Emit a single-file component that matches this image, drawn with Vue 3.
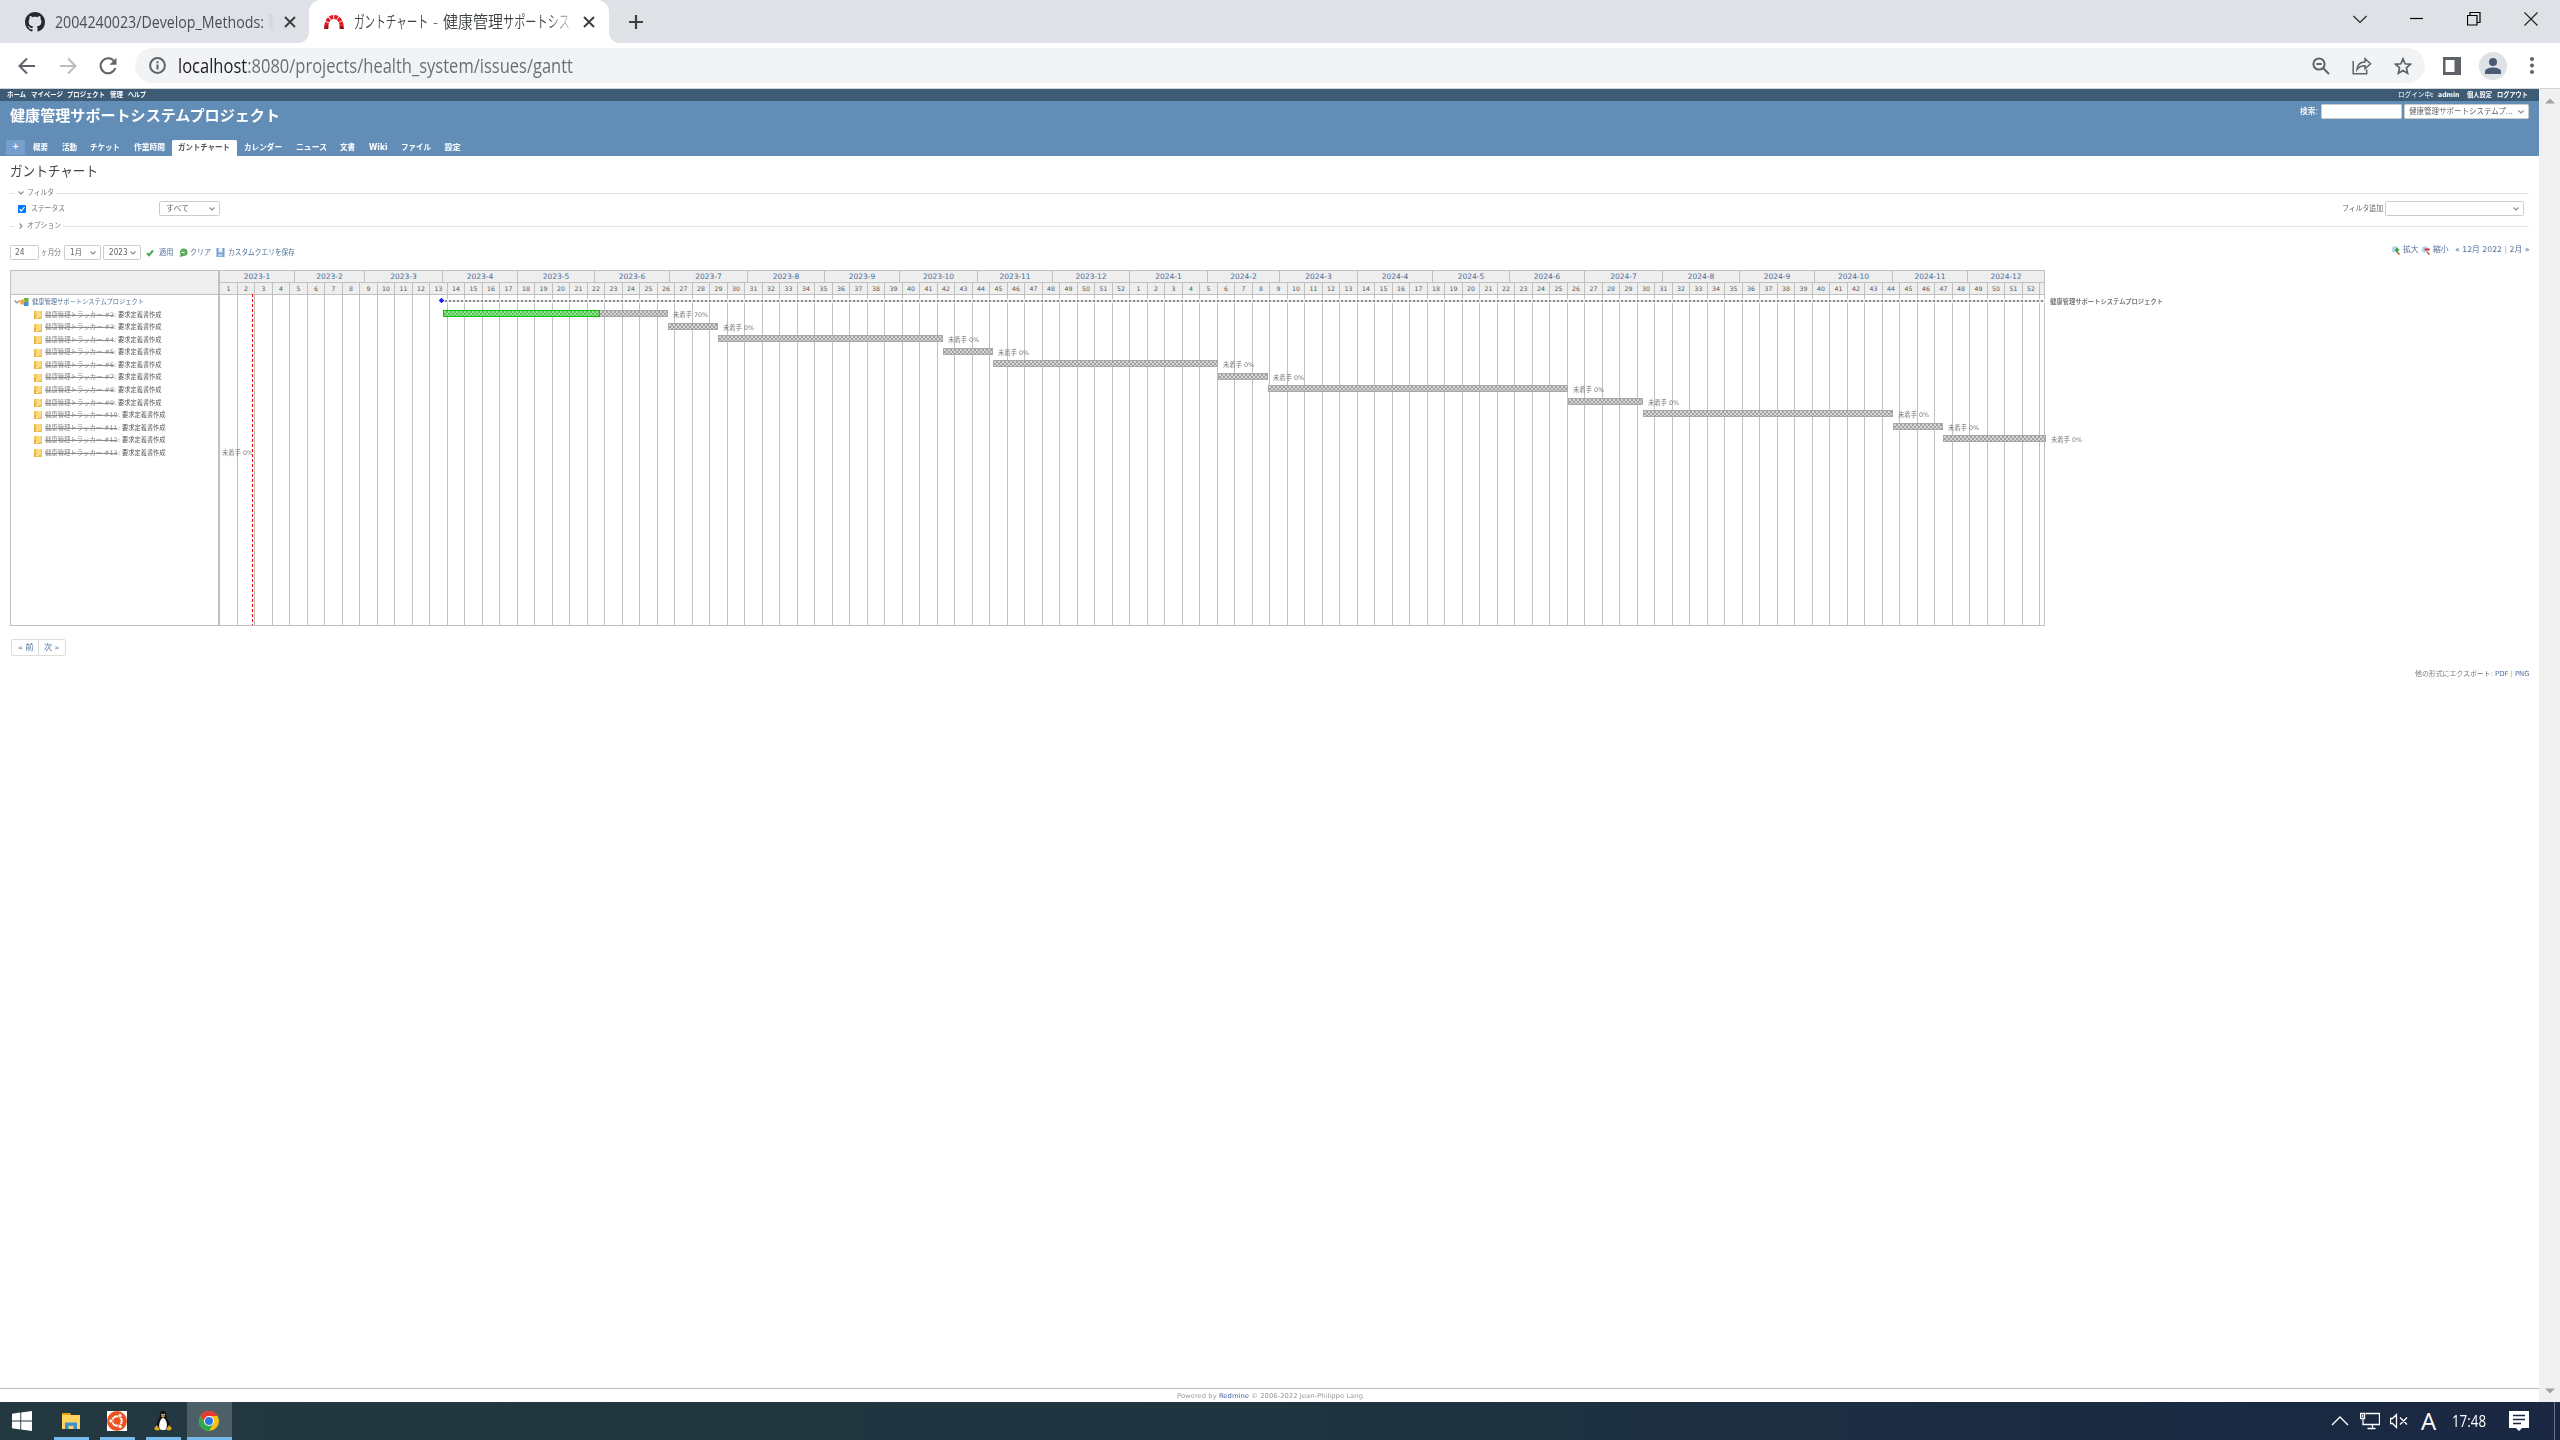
<script setup>
const vFit = {
  mounted(el, { value }) {
    const natural = el.getBoundingClientRect().width
    el.style.transform = `scaleX(${value / natural})`
    el.style.marginRight = `${value - natural}px`
  },
}

const topLinks = [['ホーム', 19], ['マイページ', 32], ['プロジェクト', 38], ['管理', 13], ['ヘルプ', 18]]
const tabs = [
  ['概要', 15], ['活動', 15], ['チケット', 30], ['作業時間', 31], ['ガントチャート', 52],
  ['カレンダー', 38], ['ニュース', 31], ['文書', 15], ['Wiki', 18.5], ['ファイル', 30], ['設定', 16],
]

const ORIGIN = 217.3
const DAY = 2.5
const LEFT = 220
const edge = (day) => Math.floor(ORIGIN + DAY * day)

const monthLengths = [31, 28, 31, 30, 31, 30, 31, 31, 30, 31, 30, 31, 31, 29, 31, 30, 31, 30, 31, 31, 30, 31, 30, 31]
const months = []
let day = 0
let prev = LEFT
monthLengths.forEach((len, i) => {
  day += len
  const end = edge(day) + 1
  months.push({ label: `${2023 + Math.floor(i / 12)}-${(i % 12) + 1}`, width: end - prev })
  prev = end
})

const weeks = []
prev = LEFT
for (let k = 0; k < 104; k++) {
  const end = edge(8 + 7 * k) + 1
  weeks.push({ label: (k % 52) + 1, width: end - prev })
  prev = end
}
weeks.push({ label: '', width: 2045 - prev })

const spans = [
  [443, 668], [668, 718], [718, 943], [943, 993], [993, 1218], [1218, 1268],
  [1268, 1568], [1568, 1643], [1643, 1893], [1893, 1943], [1943, 2046],
]
const bars = spans.map(([a, b], i) => ({
  left: a - LEFT,
  width: b - a,
  top: Math.round(15 + 12.5 * i),
  text: i === 0 ? '未着手 70%' : '未着手 0%',
  textWidth: i === 0 ? 35 : 31,
  done: i === 0 ? 157 : 0,
}))
const issues = Array.from({ length: 12 }, (_, i) => i + 2)
</script>

<template>
  <div class="screen">
    <div class="tabstrip">
      <div class="btab first">
        <svg class="gh" width="20" height="20" viewBox="0 0 16 16"><path fill="#24292f" d="M8 0C3.58 0 0 3.58 0 8c0 3.54 2.29 6.53 5.47 7.59.4.07.55-.17.55-.38 0-.19-.01-.82-.01-1.49-2.01.37-2.53-.49-2.69-.94-.09-.23-.48-.94-.82-1.13-.28-.15-.68-.52-.01-.53.63-.01 1.08.58 1.23.82.72 1.21 1.87.87 2.33.66.07-.52.28-.87.51-1.07-1.78-.2-3.64-.89-3.64-3.95 0-.87.31-1.59.82-2.15-.08-.2-.36-1.02.08-2.12 0 0 .67-.21 2.2.82.64-.18 1.32-.27 2-.27s1.36.09 2 .27c1.53-1.04 2.2-.82 2.2-.82.44 1.1.16 1.92.08 2.12.51.56.82 1.27.82 2.15 0 3.07-1.87 3.75-3.65 3.95.29.25.54.73.54 1.48 0 1.07-.01 1.93-.01 2.2 0 .21.15.46.55.38A8.01 8.01 0 0 0 16 8c0-4.42-3.58-8-8-8z"/></svg>
        <div class="ttl one"><span class="fit" v-fit="209">2004240023/Develop_Methods:</span><span class="fit ghost" v-fit="5">開</span></div>
        <svg width="12" height="12" viewBox="0 0 12 12"><path d="M1 1l10 10M11 1L1 11" stroke="#3c4043" stroke-width="2"/></svg>
      </div>
      <div class="btab active">
        <svg width="20" height="20" viewBox="0 0 20 20" fill="none" stroke-width="4"><path d="M2.200 14C3.500 7.500 6 5 10 5s6.500 2.500 7.800 9" stroke="#e01b22" stroke-dasharray="3.600 .8"/><path d="M0 17l.6-4 4 .9-.3 3.100zM20 17l-.6-4-4 .9.3 3.100z" fill="#a50f14"/></svg>
        <div class="ttl two"><span class="fit" v-fit="74">ガントチャート</span><span class="dash"><span class="fit" v-fit="5">-</span></span><span class="fit" v-fit="60">健康管理</span><span class="fit" v-fit="67">サポートシス</span></div>
        <svg width="12" height="12" viewBox="0 0 12 12"><path d="M1 1l10 10M11 1L1 11" stroke="#3c4043" stroke-width="2"/></svg>
      </div>
      <svg class="plus" width="14" height="14" viewBox="0 0 14 14"><path d="M7 0v14M0 7h14" stroke="#3c4043" stroke-width="2.200"/></svg>
      <div class="winctl">
        <svg width="14" height="14" viewBox="0 0 14 14"><path d="M.5 4l6.500 6.500L13.500 4"/></svg>
        <svg width="14" height="14" viewBox="0 0 14 14"><path d="M0 6.500h13" stroke="#000"/></svg>
        <svg width="14" height="14" viewBox="0 0 14 14"><path d="M.5 3.500h9.500v9.500H.5zM3 3.500v-3h10v10h-3" stroke="#000"/></svg>
        <svg width="14" height="14" viewBox="0 0 14 14"><path d="M.5.5l13 13M13.500.5l-13 13"/></svg>
      </div>
    </div>

    <div class="toolbar">
      <svg width="18" height="18" viewBox="0 0 18 18" class="i1"><path d="M17 9H2M9 1.500L1.500 9 9 16.500" stroke="#5f6368"/></svg>
      <svg width="18" height="18" viewBox="0 0 18 18" class="i2"><path d="M1 9h15M9 1.500L16.500 9 9 16.500" stroke="#babcbe"/></svg>
      <svg width="18" height="18" viewBox="0 0 18 18" class="i3"><path d="M15.300 4.500A7.500 7.500 0 1 0 16.300 11" stroke="#5f6368"/><path d="M17.500 .8v7h-7z" fill="#5f6368"/></svg>
      <div class="omni">
        <svg width="17" height="17" viewBox="0 0 17 17"><circle cx="8.500" cy="8.500" r="7.400" stroke="#5f6368"/><path d="M8.500 7.500v5M8.500 4.300v1.900" stroke="#5f6368"/></svg>
        <span class="url fit" v-fit="395"><b>localhost</b>:8080/projects/health_system/issues/gantt</span>
        <div class="oicons">
          <svg width="18" height="18" viewBox="0 0 18 18" stroke="#5f6368"><circle cx="7" cy="7" r="5.600"/><path d="M11 11l6 6M4.300 7h5.400"/></svg>
          <svg width="20" height="18" viewBox="0 0 20 18" stroke="#5f6368"><path stroke-width="1.500" d="M1.200 4v12.800h13.500V12.500M5 12.500C5.500 7.500 8.500 5 13 5V1.800l5.500 5-5.500 5V8.700c-3.500 0-6 1-8 3.800z"/></svg>
          <svg width="18" height="18" viewBox="0 0 18 18" stroke="#5f6368"><path stroke-width="1.700" d="M9 1.800l2.100 5 5.400.5-4.100 3.600 1.200 5.300L9 13.400l-4.600 2.800 1.200-5.300L1.500 7.300l5.400-.5z"/></svg>
        </div>
      </div>
      <svg class="side" width="18" height="18" viewBox="0 0 18 18"><path fill="#5f6368" d="M0 0h18v18H0z"/><path fill="#fff" d="M2.500 3h9v12h-9z"/></svg>
      <div class="avatar"><svg width="16" height="16" viewBox="0 0 16 16"><circle cx="8" cy="4" r="4"/><path d="M0 16v-2.500C0 10.500 5 9.500 8 9.500s8 1 8 4V16z"/></svg></div>
      <svg class="dots" width="4" height="17" viewBox="0 0 4 17"><circle cx="2" cy="2" r="2"/><circle cx="2" cy="8.500" r="2"/><circle cx="2" cy="15" r="2"/></svg>
    </div>

    <div class="view">
      <div class="page">
        <div class="topmenu">
          <span v-for="l in topLinks" :key="l[0]" class="fit" v-fit="l[1]">{{ l[0] }}</span>
          <div class="account"><span class="fit login" v-fit="33">ログイン中</span><span class="colon">:</span><span class="fit" v-fit="21.500">admin</span><div class="links"><span class="fit" v-fit="25">個人設定</span><span class="fit" v-fit="31">ログアウト</span></div></div>
        </div>
        <div class="header">
          <div class="hrow">
            <h1><span class="fit" v-fit="270">健康管理サポートシステムプロジェクト</span></h1>
            <div class="search"><span class="fit" v-fit="18">検索:</span><i class="box sin"></i>
              <div class="box proj"><span class="fit" v-fit="104">健康管理サポートシステムプ...</span><svg class="chev" viewBox="0 0 6 4"><path d="M.5.5L3 3 5.500.5"/></svg></div>
            </div>
          </div>
          <div class="menu">
            <div class="add">+</div>
            <div v-for="t in tabs" :key="t[0]" class="mi" :class="{ sel: t[0] === 'ガントチャート' }"><span class="fit" v-fit="t[1]">{{ t[0] }}</span></div>
          </div>
        </div>

        <div class="content">
          <h2><span class="fit" v-fit="88">ガントチャート</span></h2>
          <div class="legend"><svg class="chev" viewBox="0 0 6 4"><path d="M.5.5L3 3 5.500.5"/></svg><span class="fit" v-fit="27">フィルタ</span></div>
          <div class="status">
            <svg class="cb" width="8" height="8" viewBox="0 0 8 8"><rect width="8" height="8" rx="1" fill="#0075ff"/><path d="M1.500 4.200L3.300 6l3.200-4" fill="none" stroke="#fff" stroke-width="1.200"/></svg>
            <span class="fit lab" v-fit="34">ステータス</span>
            <div class="box all"><span class="fit" v-fit="23">すべて</span><svg class="chev" viewBox="0 0 6 4"><path d="M.5.5L3 3 5.500.5"/></svg></div>
            <div class="addf"><span class="fit" v-fit="41">フィルタ追加</span><div class="box fsel"><svg class="chev" viewBox="0 0 6 4"><path d="M.5.5L3 3 5.500.5"/></svg></div></div>
          </div>
          <div class="legend two"><svg class="chev right" viewBox="0 0 4 6"><path d="M.5.5L3 3 .5 5.500"/></svg><span class="fit" v-fit="34">オプション</span></div>

          <div class="controls">
            <div class="box num"><span class="fit" v-fit="9.500">24</span></div>
            <span class="fit kag" v-fit="20">ヶ月分</span>
            <div class="box mon"><span class="fit" v-fit="12">1月</span><svg class="chev" viewBox="0 0 6 4"><path d="M.5.5L3 3 5.500.5"/></svg></div>
            <div class="box yr"><span class="fit" v-fit="18.500">2023</span><svg class="chev" viewBox="0 0 6 4"><path d="M.5.5L3 3 5.500.5"/></svg></div>
            <svg class="c1" width="8" height="8" viewBox="0 0 8 8"><path d="M1 4.200l2 2L7 1.500" fill="none" stroke="#4aa34d" stroke-width="2"/></svg>
            <span class="fit link" v-fit="14.500">適用</span>
            <svg class="c2" width="9" height="9" viewBox="0 0 9 9"><circle cx="4.800" cy="4.300" r="3.800" fill="#5cab5a"/><path d="M2.500 4.500h3" stroke="#e6f4e4" stroke-width="1.300"/><path d="M.5 8.500L3.500 5v3.500z" fill="#3f8f3f"/></svg>
            <span class="fit link" v-fit="21">クリア</span>
            <svg class="c3" width="9" height="9" viewBox="0 0 9 9"><path d="M.5 0h8v9h-8z" fill="#6b9fd6"/><path d="M2.500 0h4v4.500h-4z" fill="#e8f1fa"/><path d="M2 6h4.500v2.500H2z" fill="#bdd5ec"/></svg>
            <span class="fit link" v-fit="67">カスタムクエリを保存</span>
            <div class="zoom">
              <svg width="9" height="9" viewBox="0 0 9 9"><circle cx="4" cy="3.500" r="3.300" fill="#b9d7ef"/><path d="M6 6l2.500 2.500" stroke="#b5703a" stroke-width="1.600"/><path d="M6 1.800v4.400M3.800 4h4.400" stroke="#3c9a3c" stroke-width="1.600"/></svg>
              <span class="fit link" v-fit="15.500">拡大</span>
              <svg width="9" height="9" viewBox="0 0 9 9"><circle cx="4" cy="3.500" r="3.300" fill="#b9d7ef"/><path d="M6 6l2.500 2.500" stroke="#b5703a" stroke-width="1.600"/><path d="M3.600 3.500h5" stroke="#e02a2a" stroke-width="2"/></svg>
              <span class="fit link" v-fit="15.500">縮小</span>
              <div class="nav"><span class="fit link" v-fit="74.500">« 12月 2022 <em>|</em> 2月 »</span></div>
            </div>
          </div>

          <div class="gantt">
            <div class="subjects">
              <div class="shead"></div>
              <div class="srow root"><svg class="chev" viewBox="0 0 6 4"><path d="M.5.5L3 3 5.500.5"/></svg><svg class="pic" width="9" height="8" viewBox="0 0 9 8"><path d="M4 0h4.500v4H4z" fill="#58b84e"/><circle cx="2.700" cy="4" r="2.700" fill="#f2a93b"/><path d="M4 4h4.500v4H4z" fill="#4a8fd8"/></svg><span class="fit link" v-fit="112">健康管理サポートシステムプロジェクト</span></div>
              <div v-for="n in issues" :key="n" class="srow">
                <svg class="fold" width="8" height="8" viewBox="0 0 8 8"><path d="M0 0h8v8H0z" fill="#f3c24f"/><path d="M2.500 0H7v6H2.500z" fill="#fadc84"/><path d="M0 4h1.500v4H0z" fill="#e9a548"/><path d="M2 6h2v1H2z" fill="#fff3cf"/></svg>
                <s class="fit" v-fit="n > 9 ? 72.500 : 69">健康管理トラッカー #{{ n }}</s><span class="fit subj" v-fit="47.500">: 要求定義書作成</span>
              </div>
            </div>
            <div class="chart">
              <div class="heads"><div v-for="m in months" :key="m.label" class="mcell" :style="{ width: m.width + 'px' }">{{ m.label }}</div></div>
              <div class="heads wk"><div v-for="(w, i) in weeks" :key="i" class="wcell" :style="{ width: w.width + 'px' }">{{ w.label }}</div></div>
              <div class="cols"><div v-for="(w, i) in weeks" :key="i" class="col" :style="{ width: w.width + 'px' }"></div></div>
              <div class="canvas">
                <div class="pline"></div>
                <svg class="diamond" width="5" height="5" viewBox="0 0 5 5"><path d="M2.500-.3l2.800 2.800-2.800 2.800L-.3 2.500z" fill="#2020ff"/></svg>
                <div class="plabel"><span class="fit" v-fit="113">健康管理サポートシステムプロジェクト</span></div>
                <div v-for="(b, i) in bars" :key="i" class="task" :style="{ left: b.left + 'px', top: b.top + 'px' }">
                  <div class="bar" :style="{ width: b.width + 'px' }"><div v-if="b.done" class="done" :style="{ width: b.done + 'px' }"></div></div>
                  <span class="fit tl" v-fit="b.textWidth">{{ b.text }}</span>
                </div>
                <div class="task nodate"><span class="fit" v-fit="31">未着手 0%</span></div>
                <div class="today"></div>
              </div>
            </div>
          </div>

          <div class="pager"><div><span class="fit" v-fit="15.500">« 前</span></div><div><span class="fit" v-fit="15.500">次 »</span></div></div>
          <div class="export"><span class="fit" v-fit="78">他の形式にエクスポート:</span><div class="pdf"><span class="fit link" v-fit="13.500">PDF</span></div><em>|</em><span class="fit link" v-fit="14.500">PNG</span></div>
        </div>
        <div class="footer"><span class="fit" v-fit="186">Powered by <a>Redmine</a> © 2006-2022 Jean-Philippe Lang</span></div>
      </div>
      <div class="scroll"><svg width="10" height="6" viewBox="0 0 10 6"><path d="M0 5.500L5 .5l5 5z" fill="#a3a3a3"/></svg><svg width="10" height="6" viewBox="0 0 10 6"><path d="M0 .5l5 5 5-5z" fill="#a3a3a3"/></svg></div>
    </div>

    <div class="taskbar">
      <div class="app start"><svg width="20" height="20" viewBox="0 0 20 20" fill="#fff"><path d="M0 2.800L8.300 1.500v8H0zM9.200 1.400L20 0v9.500H9.200zM0 10.400h8.300v8L0 17.200zM9.200 10.400H20V20L9.200 18.500z"/></svg></div>
      <div class="app run a1"><svg width="18" height="18" viewBox="0 0 18 18"><path d="M0 1h8l1.500 2.500H0z" fill="#e5a00d"/><path d="M0 3h18v14H0z" fill="#ffd35c"/><path d="M3 17v-6.500h12V17h-3.500v-3.300h-5V17z" fill="#3a8fd6"/></svg></div>
      <div class="app run a2"><svg width="20" height="20" viewBox="0 0 20 20"><path fill="#fff" d="M0 0h20v20H0z"/><circle cx="10" cy="10" r="10" fill="#e95420"/><circle cx="10" cy="10" r="4.700" fill="none" stroke="#fff" stroke-width="1.900"/><g fill="#fff" stroke="#e95420" stroke-width=".8"><circle cx="3.800" cy="10" r="2"/><circle cx="13.100" cy="4.600" r="2"/><circle cx="13.100" cy="15.400" r="2"/></g></svg></div>
      <div class="app run a3"><svg width="18" height="20" viewBox="0 0 18 20"><path d="M9 0c3 0 3.300 2.500 3.300 5 0 3 4 5 3.200 11H2.500C2 11 5.700 8 5.700 5 5.700 2.500 6 0 9 0z" fill="#111"/><path d="M9 7c2.500 0 4.300 5 3.800 8.500S11 19 9 19s-3.500-.5-3.800-3.500S6.500 7 9 7z" fill="#fff"/><path d="M6.800 5L9 4l2.200 1L9 6.800zM0 17.500L3 14l3 5-4 .5zM18 17.500L15 14l-3 5 4 .5z" fill="#e0a61c"/><circle cx="8" cy="3.500" r=".8" fill="#eee"/><circle cx="10.200" cy="3.500" r=".8" fill="#eee"/></svg></div>
      <div class="app run a4"><svg width="20" height="20" viewBox="0 0 20 20"><circle cx="10" cy="10" r="10" fill="#fbc116"/><path d="M10 5h8.660A10 10 0 0 0 1.340 5l4.500 7z" fill="#e33b2e"/><path d="M1.340 5A10 10 0 0 0 10 20l4.330-7.500L10 14 5.670 12.500z" fill="#2da94f"/><circle cx="10" cy="10" r="5" fill="#fff"/><circle cx="10" cy="10" r="4" fill="#2a75e8"/></svg></div>
      <div class="tray">
        <svg class="up" width="18" height="10" viewBox="0 0 18 10"><path d="M1 9l8-8 8 8"/></svg>
        <svg class="net" width="20" height="18" viewBox="0 0 20 18"><path d="M5.500 1.500h14v11h-14M3 7.500v5h2.500M12.500 12.500v3M7.500 16.500h8M.5 1.500h4v5h-4zM2.500 3v2"/></svg>
        <svg class="vol" width="18" height="16" viewBox="0 0 18 16"><path d="M.5 5.500h2L6.500 1.500v13l-4-4h-2zM10 4.500l7 7M17 4.500l-7 7"/></svg>
        <span class="ime">A</span>
        <div class="clock"><span class="fit" v-fit="34">17:48</span></div>
        <svg class="note" width="20" height="20" viewBox="0 0 20 20"><path d="M0 0h20v17h-7l-3 3-3-3H0z" fill="#fff" stroke="none"/><path d="M4 4.500h12M4 8.500h12M4 12.500h8" stroke="#1a2742"/></svg>
        <i class="edge"></i>
      </div>
    </div>
  </div>
</template>

<style>
body { margin: 0; overflow: hidden; }
</style>
<style scoped>
.screen { width: 2560px; height: 1440px; display: flex; flex-direction: column; background: #fff; overflow: hidden; font-family: "DejaVu Sans", "Noto Sans CJK JP", sans-serif; box-sizing: border-box; line-height: 1; }
.screen * { box-sizing: border-box; }
svg { display: block; flex: none; }
.fit { display: inline-block; white-space: pre; transform-origin: 0 50%; flex: none; }
em { font-style: normal; color: #d89b6a; }

.tabstrip { height: 43px; flex: none; background: #dee1e6; display: flex; align-items: center; }
.btab { height: 43px; display: flex; align-items: center; flex: none; }
.first { width: 309px; padding-left: 25px; background: #dee1e6; }
.active { width: 300px; padding-left: 15px; background: #fff; border-radius: 12px 12px 0 0; position: relative; }
.active::before, .active::after { content: ""; position: absolute; bottom: 0; width: 10px; height: 10px; }
.active::before { left: -10px; background: radial-gradient(circle at 0 0, #dee1e6 9.500px, #fff 10px); }
.active::after { right: -10px; background: radial-gradient(circle at 100% 0, #dee1e6 9.500px, #fff 10px); }
.ttl { font: 16px/24px "Open Sans", "Noto Sans CJK JP", sans-serif; color: #45494d; display: flex; flex: none; }
.ttl.one { margin-left: 10px; width: 229px; color: #4b4f54; padding-top: 1px; }
.ttl.two { margin-left: 10px; width: 229px; color: #3c4043; font-size: 16.500px; font-weight: 350; padding-top: 1px; -webkit-mask-image: linear-gradient(90deg, #000 195px, rgba(0, 0, 0, .2) 217px); }
.ttl .dash { margin-left: 5px; width: 10px; }
.ghost { color: #c8cbd0; margin-left: 5px; -webkit-mask-image: linear-gradient(90deg, #000, rgba(0, 0, 0, .3)); }
.plus { margin-left: 20px; }
.winctl { margin-left: auto; display: flex; gap: 43px; padding-right: 22px; margin-bottom: 6px; }
.winctl svg { fill: none; stroke: #222; stroke-width: 1.200; }

.toolbar { height: 46px; flex: none; border-bottom: 1px solid #d3d4d5; display: flex; align-items: center; padding-left: 18px; }
.toolbar svg { fill: none; stroke-width: 2; }
.i2 { margin-left: 23px; }
.i3 { margin-left: 22px; }
.omni { margin-left: 18px; width: 2290px; height: 35px; border-radius: 18px; background: #f1f3f4; display: flex; align-items: center; padding-left: 14px; flex: none; }
.url { margin-left: 12px; font: 19.500px/27px "Open Sans", sans-serif; color: #6b6f74; }
.url b { font-weight: 400; color: #202124; }
.oicons { margin-left: auto; display: flex; gap: 22px; padding-right: 13px; }
.side { margin-left: 18px; }
.avatar { margin-left: 18px; width: 28px; height: 28px; border-radius: 50%; background: #dee1e6; display: flex; align-items: center; justify-content: center; }
.toolbar .avatar svg { fill: #4a5a75; }
.toolbar .dots { margin-left: 23px; fill: #5f6368; }

.view { flex: 1; display: flex; min-height: 0; }
.page { width: 2539px; display: flex; flex-direction: column; color: #666; font-size: 6.500px; }
.topmenu { height: 12px; flex: none; background: #3e5b76; color: #fff; font-weight: 700; font-size: 6.800px; display: flex; align-items: center; padding-left: 7px; gap: 4.700px; }
.account { margin-left: auto; display: flex; align-items: center; padding-right: 11px; }
.login { font-weight: 400; }
.colon { width: 7px; }
.links { display: flex; gap: 5px; margin-left: 8px; }
.header { height: 55px; flex: none; background: #628db6; color: #fff; display: flex; flex-direction: column; justify-content: space-between; font-weight: 700; }
.hrow { display: flex; align-items: flex-start; padding: 3px 10px 0 10px; }
h1 { margin: 4px 0 0; font-size: 15px; line-height: 17px; font-weight: 700; }
.search { margin-left: auto; display: flex; align-items: center; gap: 2.500px; }
.search > .fit { font-weight: 500; font-size: 8px; }
.box { height: 15px; border: 1px solid #ccc; border-radius: 1.500px; background: #fff; color: #666; font-weight: 400; font-size: 8px; display: flex; align-items: center; flex: none; }
.chev { width: 6px; height: 4px; fill: none; stroke: #8a8a8a; stroke-width: 1.100; }
.box .chev { margin-left: auto; margin-right: 4px; }
.sin { width: 81px; }
.proj { width: 125px; padding-left: 4px; }
.menu { display: flex; align-items: flex-end; gap: .6px; padding-left: 6px; font-size: 8px; }
.add { width: 19px; height: 15px; background: #759fcf; border-radius: 1.500px; margin-bottom: 1px; line-height: 14px; text-align: center; margin-right: 1px; }
.mi { height: 16px; line-height: 15px; padding: 0 6.500px; border-radius: 1.500px 1.500px 0 0; display: flex; }
.sel { background: #fff; color: #555; }

.content { flex: 1; padding: 0 10px; display: flex; flex-direction: column; }
h2 { margin: 0; height: 30px; display: flex; align-items: center; font-size: 14px; font-weight: 400; color: #444; flex: none; }
.legend { height: 14px; flex: none; display: flex; align-items: center; color: #777; font-size: 7.500px; }
.legend::before { content: ""; width: 5px; height: 1px; background: #e2e2e2; }
.legend::after { content: ""; flex: 1; height: 1px; background: #e2e2e2; margin-left: 2px; }
.legend .chev { margin: 0 3px; }
.chev.right { width: 4px; height: 6px; }
.legend .chev.right { margin: 0 4px; }
.status { height: 17px; flex: none; display: flex; align-items: center; padding-left: 8px; font-size: 7.500px; }
.lab { margin-left: 5px; color: #777; }
.all { width: 61px; padding-left: 6px; }
.status .all { margin-left: 94px; }
.addf { margin-left: auto; display: flex; align-items: center; padding-right: 5px; gap: 2px; }
.fsel { width: 139px; }
.legend.two { margin-top: 2px; }
.controls { margin-top: 12px; height: 15px; flex: none; display: flex; align-items: center; font-size: 7.800px; }
.link { color: #4f7099; }
.num { width: 29px; padding-left: 4px; }
.kag { margin-left: 2px; color: #777; }
.mon { width: 37px; padding-left: 5px; }
.controls .mon { margin-left: 3px; }
.yr { width: 38px; margin-left: 2px; padding-left: 5px; }
.c1 { margin: 0 5px 0 5px; }
.c2 { margin: 0 2.500px 0 5px; }
.c3 { margin: 0 3px 0 5px; }
.zoom { margin-left: auto; display: flex; align-items: center; gap: 3px; margin-top: -5px; }
.nav { padding-left: 3px; }

.gantt { margin-top: 10px; height: 356px; flex: none; display: flex; border-top: 1px solid #c0c0c0; border-bottom: 1px solid #c0c0c0; width: 2035px; }
.subjects { width: 210px; border-left: 1px solid #c0c0c0; border-right: 2px solid #c0c0c0; font-size: 6.300px; flex: none; }
.shead { height: 24px; background: #eee; border-bottom: 1px solid #c0c0c0; margin-bottom: 1.200px; }
.srow { height: 12.540px; display: flex; align-items: center; padding-left: 23px; color: #666; }
.srow s { margin-left: 3px; color: #858585; text-decoration-color: #8c8c8c; }
.srow .subj { color: #555; }
.root { padding-left: 3px; }
.root .pic { margin: 0 3px 0 0; }
.chart { flex: 1; position: relative; display: flex; flex-direction: column; }
.heads { height: 12px; flex: none; display: flex; background: #eee; border-bottom: 1px solid #c0c0c0; }
.mcell, .wcell, .col { border-right: 1px solid #c0c0c0; flex: none; text-align: center; }
.mcell { font-size: 7.500px; line-height: 11px; color: #4a6c98; letter-spacing: -.03px; }
.wcell { font-size: 6.200px; line-height: 11px; color: #555; }
.cols { flex: 1; display: flex; }
.canvas { position: absolute; left: 0; top: 24px; width: 1825px; height: 330px; }
.pline { position: absolute; left: 221px; top: 4px; width: 1604px; height: 4px; background: repeating-linear-gradient(90deg, #8c8c8c 0 2px, #e4e4e4 2px 4px) 0 1px / 100% 2px no-repeat, #fff; }
.diamond { position: absolute; left: 219px; top: 3px; }
.plabel { position: absolute; left: 1830px; top: 4px; font-size: 6.300px; font-weight: 700; color: #777; }
.task { position: absolute; display: flex; font-size: 6.300px; color: #777; }
.bar { height: 7px; border: 1px solid #a8a8a8; background: conic-gradient(#a2a2a2 25%, #d6d6d6 0 50%, #a2a2a2 0 75%, #d6d6d6 0) 0 0 / 4px 4px; position: relative; }
.done { position: absolute; left: -1px; top: -1px; height: 7px; border: 1px solid #00c400; background: conic-gradient(#4fc44f 25%, #9be09b 0 50%, #4fc44f 0 75%, #9be09b 0) 0 0 / 4px 4px; }
.tl { margin-left: 4.500px; margin-top: 2px; }
.nodate { left: 2px; top: 154.500px; }
.today { position: absolute; left: 32px; top: -1px; width: 1px; height: 331px; background: repeating-linear-gradient(180deg, #f00 0 3px, #fff 3px 5px); }

.pager { margin: 13px 0 0 1px; display: flex; font-size: 7.500px; color: #4f7099; flex: none; }
.pager div { width: 28px; height: 17px; border: 1px solid #ddd; border-radius: 2px 0 0 2px; display: flex; align-items: center; padding-left: 5.500px; }
.pager div + div { margin-left: -1px; border-radius: 0 2px 2px 0; padding-left: 5px; }
.export { margin-top: 12px; height: 13px; display: flex; align-items: center; justify-content: flex-end; color: #777; font-size: 7px; }
.pdf { margin-left: 2px; }
.export em { margin: 0 2px; }
.footer { height: 14px; flex: none; border-top: 1px solid #bbb; text-align: center; color: #999; font-size: 6.600px; line-height: 15px; }
.footer a { color: #4668a8; }
.scroll { width: 21px; background: #f0f0f0; display: flex; flex-direction: column; justify-content: space-between; align-items: center; padding: 9px 0 8px; }

.taskbar { height: 38px; flex: none; display: flex; background: linear-gradient(90deg, #233840, #1f343f 50%, #1a2a42 85%, #1a2742); }
.app { height: 38px; display: flex; align-items: center; justify-content: center; flex: none; }
.start { width: 44px; }
.run { width: 35px; border-bottom: 3px solid #76b9ed; padding: 3px 1px 0 0; }
.a1 { margin-left: 10px; }
.a2, .a3 { margin-left: 11px; }
.a4 { margin-left: 6px; width: 45px; background: #4e6067; }
.tray { margin-left: auto; display: flex; align-items: center; height: 38px; color: #fff; }
.tray svg { fill: none; stroke: #fff; stroke-width: 1.300; }
.net { margin-left: 11px; }
.vol { margin-left: 10px; }
.ime { font: 24px/36px "Open Sans", sans-serif; margin-left: 13px; width: 16px; }
.clock { font: 16px/36px "Open Sans", sans-serif; margin-left: 15px; }
.note { margin-left: 23px; }
.edge { width: 1px; height: 38px; background: #6d7586; margin: 0 5px 0 25px; }
</style>
